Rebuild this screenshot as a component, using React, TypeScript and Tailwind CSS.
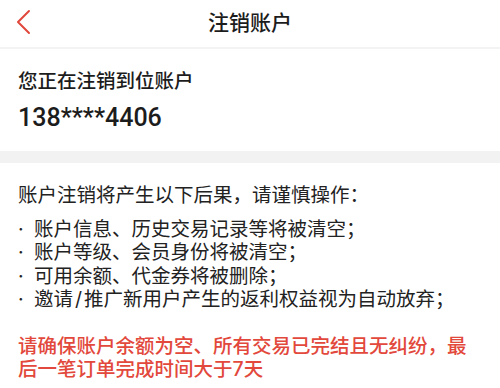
const font = { fontFamily: '"Inter", "Noto Sans CJK SC", sans-serif' };

const consequences = [
  "账户信息、历史交易记录等将被清空；",
  "账户等级、会员身份将被清空；",
  "可用余额、代金券将被删除；",
];

export default function App() {
  return (
    <div
      className="w-[500px] h-[388px] overflow-hidden bg-white text-[#1c1c1c]"
      style={font}
    >
      <header className="relative flex h-[49px] items-center justify-center border-b-2 border-[#f3f3f3] pb-[2px]">
        <button className="absolute left-[14px] top-[8px] text-[#e0483c]">
          <svg width="20" height="28" viewBox="0 0 20 28" fill="none">
            <polyline
              points="15,3 4,14 15,25"
              stroke="currentColor"
              strokeWidth="2"
              strokeLinecap="round"
              strokeLinejoin="round"
            />
          </svg>
        </button>
        <h1 className="text-[21px] font-medium leading-none">注销账户</h1>
      </header>

      <section className="px-[18px] pt-[21px] pb-[18px]">
        <p className="text-[19.5px] font-medium leading-[23px]">您正在注销到位账户</p>
        <p
          className="mt-[10px] text-[25px] font-medium leading-[30px]"
          style={{ fontFamily: 'Roboto, "Noto Sans CJK SC", sans-serif' }}
        >
          138****4406
        </p>
      </section>

      <div className="h-[12px] bg-[#f2f2f2]" />

      <section className="px-[18px] pt-[21px] text-[19.5px] text-[#222]">
        <p className="leading-[23px]">账户注销将产生以下后果，请谨慎操作：</p>
        <ul className="mt-[11px] leading-[23.3px]">
          {consequences.map((item) => (
            <li key={item} className="flex">
              <span className="w-[16px] shrink-0">·</span>
              <span className="whitespace-nowrap">{item}</span>
            </li>
          ))}
          <li className="flex">
            <span className="w-[16px] shrink-0">·</span>
            <span className="whitespace-nowrap">
              邀请<span className="mx-[2px]">/</span>推广新用户产生的返利权益视为自动放弃；
            </span>
          </li>
        </ul>
        <p className="mt-[24px] font-medium leading-[23px] text-[#e2483b]">
          请确保账户余额为空、所有交易已完结且无纠纷，最后一笔订单完成时间大于7天
        </p>
      </section>
    </div>
  );
}
